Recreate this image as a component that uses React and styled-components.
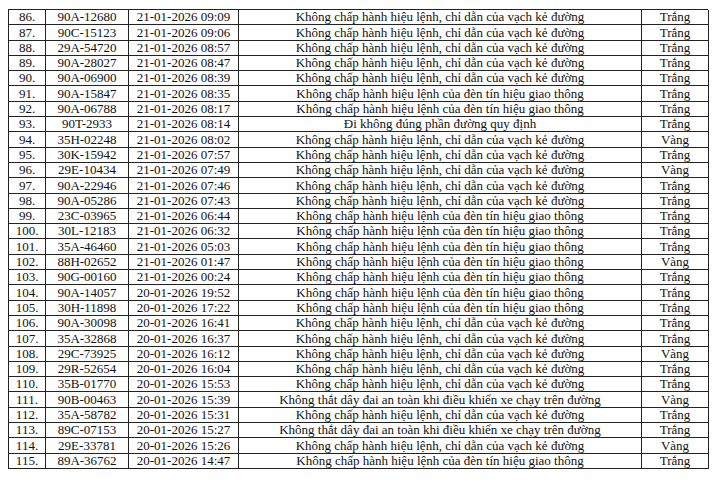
import React from "react";
import styled, { createGlobalStyle } from "styled-components";

const rows = [
  ["86.", "90A-12680", "21-01-2026 09:09", "Không chấp hành hiệu lệnh, chỉ dẫn của vạch kẻ đường", "Trắng"],
  ["87.", "90C-15123", "21-01-2026 09:06", "Không chấp hành hiệu lệnh, chỉ dẫn của vạch kẻ đường", "Trắng"],
  ["88.", "29A-54720", "21-01-2026 08:57", "Không chấp hành hiệu lệnh, chỉ dẫn của vạch kẻ đường", "Trắng"],
  ["89.", "90A-28027", "21-01-2026 08:47", "Không chấp hành hiệu lệnh, chỉ dẫn của vạch kẻ đường", "Trắng"],
  ["90.", "90A-06900", "21-01-2026 08:39", "Không chấp hành hiệu lệnh, chỉ dẫn của vạch kẻ đường", "Trắng"],
  ["91.", "90A-15847", "21-01-2026 08:35", "Không chấp hành hiệu lệnh của đèn tín hiệu giao thông", "Trắng"],
  ["92.", "90A-06788", "21-01-2026 08:17", "Không chấp hành hiệu lệnh của đèn tín hiệu giao thông", "Trắng"],
  ["93.", "90T-2933", "21-01-2026 08:14", "Đi không đúng phần đường quy định", "Trắng"],
  ["94.", "35H-02248", "21-01-2026 08:02", "Không chấp hành hiệu lệnh, chỉ dẫn của vạch kẻ đường", "Vàng"],
  ["95.", "30K-15942", "21-01-2026 07:57", "Không chấp hành hiệu lệnh, chỉ dẫn của vạch kẻ đường", "Trắng"],
  ["96.", "29E-10434", "21-01-2026 07:49", "Không chấp hành hiệu lệnh, chỉ dẫn của vạch kẻ đường", "Vàng"],
  ["97.", "90A-22946", "21-01-2026 07:46", "Không chấp hành hiệu lệnh, chỉ dẫn của vạch kẻ đường", "Trắng"],
  ["98.", "90A-05286", "21-01-2026 07:43", "Không chấp hành hiệu lệnh, chỉ dẫn của vạch kẻ đường", "Trắng"],
  ["99.", "23C-03965", "21-01-2026 06:44", "Không chấp hành hiệu lệnh của đèn tín hiệu giao thông", "Trắng"],
  ["100.", "30L-12183", "21-01-2026 06:32", "Không chấp hành hiệu lệnh của đèn tín hiệu giao thông", "Trắng"],
  ["101.", "35A-46460", "21-01-2026 05:03", "Không chấp hành hiệu lệnh của đèn tín hiệu giao thông", "Trắng"],
  ["102.", "88H-02652", "21-01-2026 01:47", "Không chấp hành hiệu lệnh của đèn tín hiệu giao thông", "Vàng"],
  ["103.", "90G-00160", "21-01-2026 00:24", "Không chấp hành hiệu lệnh của đèn tín hiệu giao thông", "Trắng"],
  ["104.", "90A-14057", "20-01-2026 19:52", "Không chấp hành hiệu lệnh của đèn tín hiệu giao thông", "Trắng"],
  ["105.", "30H-11898", "20-01-2026 17:22", "Không chấp hành hiệu lệnh của đèn tín hiệu giao thông", "Trắng"],
  ["106.", "90A-30098", "20-01-2026 16:41", "Không chấp hành hiệu lệnh, chỉ dẫn của vạch kẻ đường", "Trắng"],
  ["107.", "35A-32868", "20-01-2026 16:37", "Không chấp hành hiệu lệnh, chỉ dẫn của vạch kẻ đường", "Trắng"],
  ["108.", "29C-73925", "20-01-2026 16:12", "Không chấp hành hiệu lệnh, chỉ dẫn của vạch kẻ đường", "Vàng"],
  ["109.", "29R-52654", "20-01-2026 16:04", "Không chấp hành hiệu lệnh, chỉ dẫn của vạch kẻ đường", "Trắng"],
  ["110.", "35B-01770", "20-01-2026 15:53", "Không chấp hành hiệu lệnh, chỉ dẫn của vạch kẻ đường", "Trắng"],
  ["111.", "90B-00463", "20-01-2026 15:39", "Không thắt dây đai an toàn khi điều khiển xe chạy trên đường", "Vàng"],
  ["112.", "35A-58782", "20-01-2026 15:31", "Không chấp hành hiệu lệnh, chỉ dẫn của vạch kẻ đường", "Trắng"],
  ["113.", "89C-07153", "20-01-2026 15:27", "Không thắt dây đai an toàn khi điều khiển xe chạy trên đường", "Trắng"],
  ["114.", "29E-33781", "20-01-2026 15:26", "Không chấp hành hiệu lệnh, chỉ dẫn của vạch kẻ đường", "Vàng"],
  ["115.", "89A-36762", "20-01-2026 14:47", "Không chấp hành hiệu lệnh của đèn tín hiệu giao thông", "Trắng"],
];

const GlobalStyle = createGlobalStyle`
  html, body {
    margin: 0;
    padding: 0;
    background: #fff;
  }
`;

const Page = styled.div`
  padding: 9px 12px 0 8px;
  font-family: "Liberation Serif", "Times New Roman", serif;
  color: #111;
`;

const Table = styled.div`
  display: grid;
  grid-template-columns: 37px 83px 110px 403px 67px;
  grid-auto-rows: 15.3px;
  width: 700px;
  border-top: 1px solid #222;
  border-left: 1px solid #222;
  box-sizing: border-box;
`;

const Cell = styled.div`
  border-right: 1px solid #222;
  border-bottom: 1px solid #222;
  font-size: 13px;
  line-height: 14px;
  text-align: center;
  white-space: nowrap;
  overflow: hidden;
  display: flex;
  align-items: flex-end;
  justify-content: center;
`;

export default function App() {
  return (
    <>
      <GlobalStyle />
      <Page>
        <Table>
          {rows.map((r) =>
            r.map((v, i) => <Cell key={r[0] + i}>{v}</Cell>)
          )}
        </Table>
      </Page>
    </>
  );
}
